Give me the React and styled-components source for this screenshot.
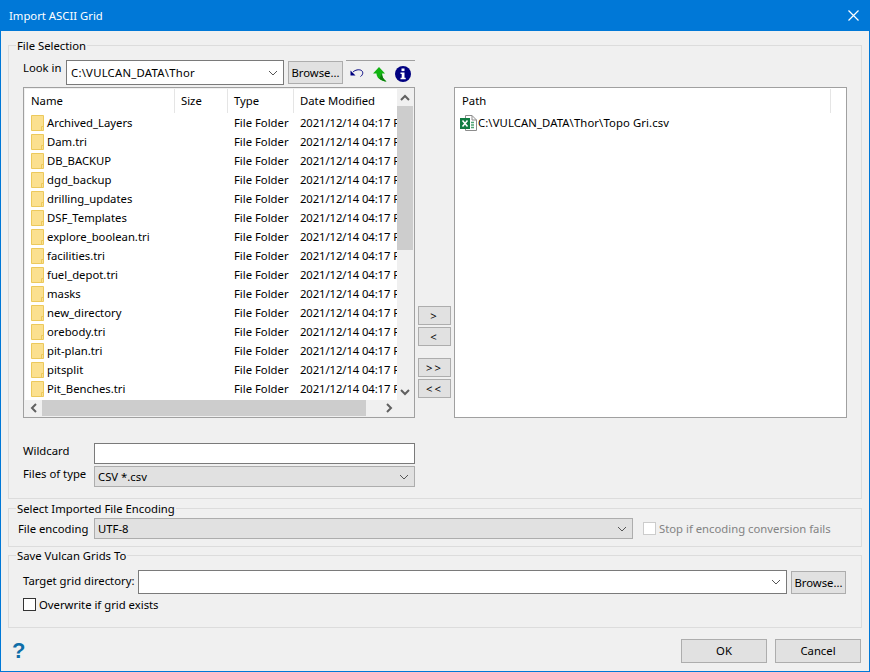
import React from 'react'
import styled, { createGlobalStyle } from 'styled-components'

const GlobalStyle = createGlobalStyle`
  html, body {
    margin: 0;
    padding: 0;
    background: #f0f0f0;
  }
  * {
    box-sizing: border-box;
  }
`

const folders = [
  'Archived_Layers',
  'Dam.tri',
  'DB_BACKUP',
  'dgd_backup',
  'drilling_updates',
  'DSF_Templates',
  'explore_boolean.tri',
  'facilities.tri',
  'fuel_depot.tri',
  'masks',
  'new_directory',
  'orebody.tri',
  'pit-plan.tri',
  'pitsplit',
  'Pit_Benches.tri'
]

const Chevron = ({ dir, color = '#606060', width = 2 }) => {
  const points = {
    up: '1,7 5,3 9,7',
    down: '1,3 5,7 9,3',
    left: '7,1 3,5 7,9',
    right: '3,1 7,5 3,9'
  }
  return (
    <svg width="10" height="10" viewBox="0 0 10 10">
      <polyline points={points[dir]} fill="none" stroke={color} strokeWidth={width} />
    </svg>
  )
}

const FolderIcon = () => (
  <svg width="13" height="16" viewBox="0 0 13 16">
    <path d="M0.5 0.5H12.5V15.5H0.5Z" fill="#fbe08f" stroke="#ecc95c" />
    <path d="M10.5 11.5V15.5M10.5 11.5H12.5" fill="none" stroke="#ecc95c" />
  </svg>
)

const ExcelIcon = () => (
  <svg width="17" height="16" viewBox="0 0 17 16">
    <path d="M5.5 0.5H12L16.5 5V15.5H5.5Z" fill="#fff" stroke="#8c8c8c" />
    <path d="M12 0.5V5H16.5" fill="none" stroke="#8c8c8c" />
    <path d="M11 7.5H14M11 10H14M11 12.5H14" stroke="#4fa373" strokeWidth="1.4" />
    <rect x="0" y="3" width="10" height="11" fill="#107c41" />
    <path d="M2.5 5.5L7.5 11.5M7.5 5.5L2.5 11.5" stroke="#fff" strokeWidth="1.5" />
  </svg>
)

const UndoIcon = () => (
  <svg width="14" height="11" viewBox="0 0 14 11">
    <path d="M3 4C5 2 9 1 11.5 2.5C13.5 4 13 7 10.5 8.5" fill="none" stroke="#000080" strokeWidth="1" />
    <path d="M0.5 2.5V7.5H5.5Z" fill="#000080" />
  </svg>
)

const UpIcon = () => (
  <svg width="14" height="15" viewBox="0 0 14 15">
    <path d="M6 0L0 6.5H3.5C3.5 10.5 7 14 13.5 14.5C10.5 12.5 9 9.5 9 6.5H12Z" fill="#12b312" />
    <path d="M9 6.5C9 9.5 10.5 12.5 13.5 14.5C10.5 14.3 8 13.2 6.5 11.5" fill="#0a7d0a" />
  </svg>
)

const InfoIcon = () => (
  <svg width="16" height="16" viewBox="0 0 16 16">
    <circle cx="8" cy="8" r="8" fill="#000080" />
    <rect x="6.5" y="2.5" width="3" height="2.6" fill="#fff" />
    <path d="M5.5 6.5H9.5V11.7H10.7V13.3H5.5V11.7H6.7V8.1H5.5Z" fill="#fff" />
  </svg>
)

const Window = styled.div`
  width: 870px;
  height: 672px;
  display: flex;
  flex-direction: column;
  background: #f0f0f0;
  border: 1px solid #0078d7;
  border-top: 0;
  font-family: 'Noto Sans', 'Open Sans', sans-serif;
  font-size: 11.3px;
  line-height: 16px;
  color: #000;
`

const TitleBar = styled.div`
  height: 31px;
  flex: none;
  margin: 0 -1px;
  padding: 0 11px 0 9px;
  display: flex;
  align-items: center;
  justify-content: space-between;
  background: #0078d7;
  color: #fff;
`

const Body = styled.div`
  flex: 1;
  padding: 7px 7px 0;
  display: flex;
  flex-direction: column;
`

const Group = styled.fieldset`
  margin: ${p => p.$top || 0}px 0 0;
  padding: ${p => p.$padding};
  min-width: 0;
  border: 1px solid #dcdcdc;
`

// the legend sits at the same x in every group, whatever the group's padding
const GroupTitle = styled.legend`
  margin-left: ${p => p.$shift}px;
  padding: 0 1px;
  height: 15px;
  line-height: 15px;
`

const Label = styled.div`
  flex: none;
  width: ${p => p.$width}px;
  white-space: nowrap;
`

const LookRow = styled.div`
  width: 392px;
  display: flex;
  align-items: flex-start;
`

const Combo = styled.div`
  flex: ${p => (p.$width ? 'none' : 1)};
  width: ${p => (p.$width ? `${p.$width}px` : 'auto')};
  height: ${p => p.$height}px;
  padding: 0 5px 0 ${p => p.$inset || 4}px;
  display: flex;
  align-items: center;
  justify-content: space-between;
  background: ${p => (p.$flat ? '#e1e1e1' : '#fff')};
  border: 1px solid ${p => (p.$flat ? '#adadad' : '#7a7a7a')};
  white-space: nowrap;
`

const ComboPath = styled.span`
  letter-spacing: 0.25px;
`

const TextInput = styled.div`
  height: 21px;
  background: #fff;
  border: 1px solid #7a7a7a;
`

const Button = styled.button`
  flex: none;
  width: ${p => p.$width}px;
  height: ${p => p.$height}px;
  margin: ${p => p.$margin || 0};
  padding: 0;
  background: #e1e1e1;
  border: 1px solid #adadad;
  border-radius: 0;
  font: inherit;
  color: #000;
`

const Toolbar = styled.div`
  flex: 1;
  height: 22px;
  margin-left: 3px;
  padding: 5px 4px 0;
  display: flex;
  align-items: flex-start;
  gap: 9px;
  border-top: 1px solid #a0a0a0;
`

const ToolIcon = styled.span`
  display: flex;
  margin-top: ${p => p.$top || 0}px;
  margin-left: ${p => p.$left || 0}px;
`

const TransferRow = styled.div`
  margin-top: 2px;
  display: flex;
  gap: 3px;
`

const ListBox = styled.div`
  flex: none;
  width: ${p => p.$width}px;
  height: 331px;
  padding: 1px;
  display: grid;
  grid-template-columns: 372px 16px;
  grid-template-rows: 311px 16px;
  background: #f0f0f0;
  border: 1px solid #a0a0a0;
`

const ListPane = styled.div`
  background: #fff;
  overflow: hidden;
`

const HeaderRow = styled.div`
  height: 24px;
  display: grid;
  grid-template-columns: ${p => p.$columns};
  background: #fff;
`

const HeaderCell = styled.div`
  padding: 4px 0 0 ${p => p.$inset || 6}px;
  border-right: ${p => (p.$last ? 0 : '1px solid #e5e5e5')};
  white-space: nowrap;
`

const FileRow = styled.div`
  height: 19px;
  display: grid;
  grid-template-columns: 150px 53px 66px 1fr;
  align-items: center;
  white-space: nowrap;
`

const NameCell = styled.div`
  padding-left: 6px;
  display: flex;
  align-items: center;
  gap: 3px;
`

const DataCell = styled.div`
  padding-left: 6px;
`

const DateCell = styled(DataCell)`
  letter-spacing: -0.1px;
`

const ScrollBar = styled.div`
  display: flex;
  flex-direction: ${p => (p.$vertical ? 'column' : 'row')};
  background: #f0f0f0;
`

const ScrollArrow = styled.div`
  flex: none;
  width: ${p => (p.$vertical ? '16px' : '17px')};
  height: ${p => (p.$vertical ? '17px' : '16px')};
  display: flex;
  align-items: center;
  justify-content: center;
`

const ScrollThumb = styled.div`
  flex: none;
  background: #cdcdcd;
`

const ScrollTrack = styled.div`
  flex: 1;
`

const Mover = styled.div`
  flex: none;
  width: 33px;
  padding-top: 219px;
  display: flex;
  flex-direction: column;
`

const MoveButton = styled(Button)`
  width: 33px;
  height: 19px;
  margin-top: ${p => p.$gap}px;
  line-height: 15px;
  letter-spacing: 2px;
`

const PathBox = styled.div`
  flex: 1;
  height: 331px;
  padding: 1px;
  background: #fff;
  border: 1px solid #a0a0a0;
`

const PathRow = styled.div`
  padding-left: 4px;
  height: 19px;
  display: flex;
  align-items: center;
  gap: 1px;
  white-space: nowrap;
  letter-spacing: 0.1px;
`

const FormGrid = styled.div`
  width: 392px;
  margin-top: 25px;
  display: grid;
  grid-template-columns: 71px 1fr;
  row-gap: 2px;
  align-items: start;
`

const InlineRow = styled.div`
  display: flex;
  align-items: ${p => p.$align || 'center'};
`

const Check = styled.span`
  flex: none;
  width: 13px;
  height: 13px;
  margin-right: 3px;
  background: #fff;
  border: 1px solid ${p => (p.$disabled ? '#cccccc' : '#333')};
`

const CheckRow = styled.div`
  margin: ${p => p.$margin};
  height: 13px;
  display: flex;
  align-items: center;
  white-space: nowrap;
  color: ${p => (p.$disabled ? '#838383' : '#000')};
`

const TargetLabel = styled(Label)`
  margin-top: 3px;
`

const Footer = styled.div`
  padding: 11px 1px 0 4px;
  display: flex;
  align-items: flex-start;
  gap: 8px;
`

const Help = styled.span`
  margin-right: auto;
  font-family: 'Liberation Sans', sans-serif;
  font-size: 22px;
  font-weight: 700;
  line-height: 24px;
  color: #0f6ea8;
`

const FlatCaret = () => <Chevron dir="down" color="#555" width={1} />

const Scroll = ({ vertical, size }) => (
  <ScrollBar $vertical={vertical}>
    <ScrollArrow $vertical={vertical}>
      <Chevron dir={vertical ? 'up' : 'left'} />
    </ScrollArrow>
    <ScrollThumb style={vertical ? { height: size } : { width: size }} />
    <ScrollTrack />
    <ScrollArrow $vertical={vertical}>
      <Chevron dir={vertical ? 'down' : 'right'} />
    </ScrollArrow>
  </ScrollBar>
)

export default function App() {
  return (
    <Window>
      <GlobalStyle />
      <TitleBar>
        Import ASCII Grid
        <svg width="11" height="11" viewBox="0 0 11 11">
          <path d="M0.5 0.5L10.5 10.5M10.5 0.5L0.5 10.5" stroke="#fff" strokeWidth="1.2" />
        </svg>
      </TitleBar>

      <Body>
        <Group $padding="7px 14px 11px">
          <GroupTitle $shift={-7}>File Selection</GroupTitle>
          <LookRow>
            <Label $width={43}>Look in</Label>
            <Combo $width={218} $height={25}>
              <ComboPath>C:\VULCAN_DATA\Thor</ComboPath>
              <FlatCaret />
            </Combo>
            <Button $width={55} $height={23} $margin="1px 0 0 4px">Browse...</Button>
            <Toolbar>
              <ToolIcon $top={2}><UndoIcon /></ToolIcon>
              <ToolIcon $top={1}><UpIcon /></ToolIcon>
              <ToolIcon $left={-1}><InfoIcon /></ToolIcon>
            </Toolbar>
          </LookRow>

          <TransferRow>
            <ListBox $width={392}>
              <ListPane>
                <HeaderRow $columns="150px 53px 66px 1fr">
                  <HeaderCell>Name</HeaderCell>
                  <HeaderCell>Size</HeaderCell>
                  <HeaderCell>Type</HeaderCell>
                  <HeaderCell $last>Date Modified</HeaderCell>
                </HeaderRow>
                {folders.map(name => (
                  <FileRow key={name}>
                    <NameCell>
                      <FolderIcon />
                      {name}
                    </NameCell>
                    <DataCell />
                    <DataCell>File Folder</DataCell>
                    <DateCell>2021/12/14 04:17 PM</DateCell>
                  </FileRow>
                ))}
              </ListPane>
              <Scroll vertical size={144} />
              <Scroll size={324} />
            </ListBox>

            <Mover>
              <MoveButton $gap={0}>&gt;</MoveButton>
              <MoveButton $gap={2}>&lt;</MoveButton>
              <MoveButton $gap={12}>&gt;&gt;</MoveButton>
              <MoveButton $gap={2}>&lt;&lt;</MoveButton>
            </Mover>

            <PathBox>
              <HeaderRow $columns="375px 1fr">
                <HeaderCell $inset={6}>Path</HeaderCell>
                <HeaderCell $last />
              </HeaderRow>
              <PathRow>
                <ExcelIcon />
                C:\VULCAN_DATA\Thor\Topo Gri.csv
              </PathRow>
            </PathBox>
          </TransferRow>

          <FormGrid>
            <Label>Wildcard</Label>
            <TextInput />
            <Label>Files of type</Label>
            <Combo $flat $height={21} $inset={3}>
              CSV *.csv
              <FlatCaret />
            </Combo>
          </FormGrid>
        </Group>

        <Group $top={2} $padding="2px 14px 7px 9px">
          <GroupTitle $shift={-2}>Select Imported File Encoding</GroupTitle>
          <InlineRow>
            <Label $width={76}>File encoding</Label>
            <Combo $flat $width={539} $height={21} $inset={3}>
              UTF-8
              <FlatCaret />
            </Combo>
            <CheckRow $disabled $margin="0 0 0 10px">
              <Check $disabled />
              Stop if encoding conversion fails
            </CheckRow>
          </InlineRow>
        </Group>

        <Group $top={1} $padding="7px 15px 16px 14px">
          <GroupTitle $shift={-7}>Save Vulcan Grids To</GroupTitle>
          <InlineRow $align="flex-start">
            <TargetLabel $width={115}>Target grid directory:</TargetLabel>
            <Combo $height={24}>
              <span />
              <FlatCaret />
            </Combo>
            <Button $width={55} $height={23} $margin="1px 0 0 4px">Browse...</Button>
          </InlineRow>
          <CheckRow $margin="4px 0 0">
            <Check />
            Overwrite if grid exists
          </CheckRow>
        </Group>

        <Footer>
          <Help>?</Help>
          <Button $width={86} $height={24}>OK</Button>
          <Button $width={86} $height={24}>Cancel</Button>
        </Footer>
      </Body>
    </Window>
  )
}
